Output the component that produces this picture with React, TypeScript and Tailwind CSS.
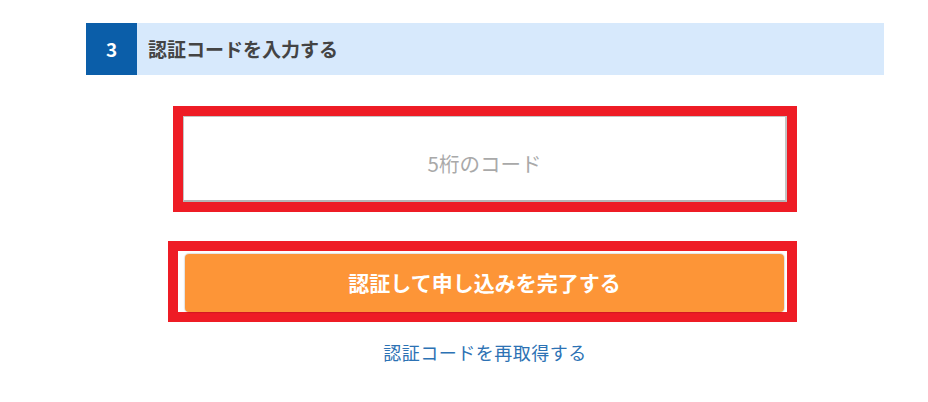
import React from "react";

const font = { fontFamily: '"Noto Sans CJK JP", "Noto Sans", sans-serif' };

export default function App() {
  return (
    <div className="w-[928px] h-[402px] bg-white" style={font}>
      <div className="pt-[23px]">
        <div className="ml-[86px] w-[798px] h-[52px] flex items-stretch bg-[#d7e9fc]">
          <div className="w-[51px] bg-[#0b5ea9] flex items-center justify-center text-white font-bold text-[19px]">
            3
          </div>
          <div className="pl-[11px] flex items-center text-[19px] font-bold text-[#444444]">
            認証コードを入力する
          </div>
        </div>
      </div>

      <div className="ml-[173px] mt-[31px] w-[624px] h-[106px] border-[10px] border-[#ee1c25]">
        <input
          className="w-full h-full border border-[#c4c4c4] border-b-2 border-r-2 border-b-[#b5b5b5] bg-white text-center text-[20.5px] placeholder:text-[#a9a9a9] outline-none pt-[8px]"
          placeholder="5桁のコード"
          style={font}
        />
      </div>

      <div className="ml-[168px] mt-[29px] w-[629px] h-[81px] border-[10px] border-[#ee1c25] bg-white pl-[7px] pr-[3px] pt-[3px]">
        <button
          className="w-full h-[58px] rounded-[4px] bg-[#fd9537] text-white font-bold text-[21px] flex items-center justify-center shadow-[0_0_1px_1px_rgba(0,0,0,0.12)]"
          style={font}
        >
          認証して申し込みを完了する
        </button>
      </div>

      <div className="mt-[18px] flex justify-center pl-[42px] w-[928px]">
        <span className="text-[18px] text-[#2c72b4] leading-[24px] tracking-[0.5px]">認証コードを再取得する</span>
      </div>
    </div>
  );
}
